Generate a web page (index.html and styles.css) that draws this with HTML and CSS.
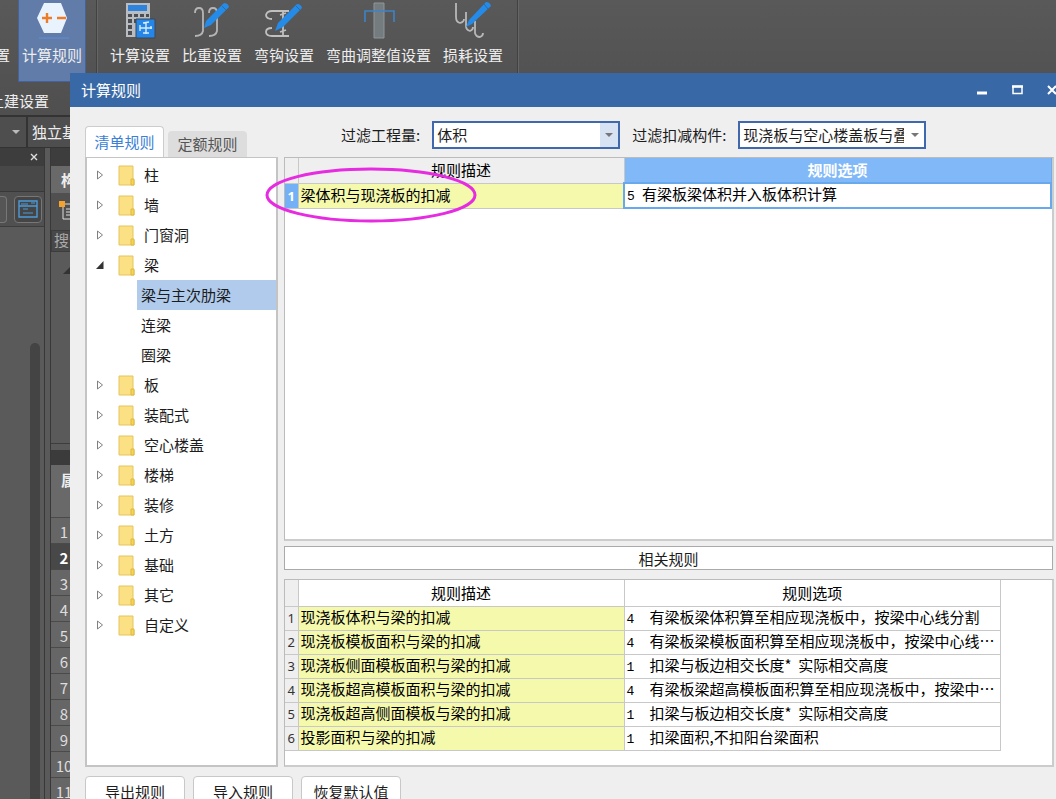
FILE: index.html
```html
<!DOCTYPE html>
<html lang="zh-CN">
<head>
<meta charset="utf-8">
<title>计算规则</title>
<link rel="stylesheet" href="styles.css">
</head>
<body>
<div class="app">
  <header class="ribbon">
    <div class="ribbon-row">
      <button class="tool tool-clipped">置</button>
      <button class="tool tool-active">
        <svg class="tool-icon" viewBox="0 0 40 40"><path d="M12 3h17l6 15-6 15H12L5 18z" fill="#e9f3fd"/><path d="M10 18h10M15 13v10M25 18h9" stroke="#ee7b28" stroke-width="2.4"/><path d="M7 38h30" stroke="#5e8fd8"/></svg>
        计算规则</button>
      <span class="divider"></span>
      <button class="tool">
        <svg class="tool-icon" viewBox="0 0 40 40"><path d="M6 3h24v34H6z" fill="#b9bcc0"/><path d="M8 5h19v6H8z" fill="#2e83dc"/><path d="M8 14h4v3H8zM14 14h4v3h-4zM20 14h4v3h-4zM26 14h3v3h-3zM8 19h4v4H8zM14 19h4v4h-4zM8 25h4v4H8zM8 31h4v4H8z" fill="#4b4e52"/><path d="M16 19h19v19H16z" fill="#2386e8" stroke="#3b4652"/><path d="M20 28h12M26 22v12M23 23l6-1M20 25v6M31 26v3M23 33h6" stroke="#d8eaff" stroke-width="1.4"/></svg>
        计算设置</button>
      <button class="tool">
        <svg class="tool-icon" viewBox="0 0 40 40"><g fill="none" stroke="#b5b5b5" stroke-width="1.8"><path d="M3 13Q3 8 7 8Q11 8 11 13V31Q10 36 3 36M17 13Q17 8 21 8Q25 8 25 13V31Q24 36 17 36"/></g><path d="M12 28l2-7L32 3q4 0 5 4L19 25z" fill="#258be8"/><path d="M30 6l4 4" stroke="#236dad"/></svg>
        比重设置</button>
      <button class="tool">
        <svg class="tool-icon" viewBox="0 0 40 40"><g fill="none" stroke="#c0c0c0" stroke-width="1.8"><path d="M8 19Q2 19 2 15Q3 11 8 11h17M25 36H8Q2 36 2 32Q2 28 8 28M19 11v25M16 15l6-2M16 32l6-2"/></g><path d="M11 31l3-8L33 4q4 0 5 4L19 27z" fill="#258be8"/><path d="M32 6l4 4" stroke="#236dad"/></svg>
        弯钩设置</button>
      <button class="tool">
        <svg class="tool-icon" viewBox="0 0 40 40"><path d="M15 3h10v35H15z" fill="#747c80" stroke="#8f969a"/><path d="M6 22V11h29v11" fill="none" stroke="#3e83c9" stroke-width="1.6"/></svg>
        弯曲调整值设置</button>
      <button class="tool">
        <svg class="tool-icon" viewBox="0 0 40 40"><g fill="none" stroke="#b8b8b8" stroke-width="1.8"><path d="M3 3v14q0 5 4 6q4-1 4-4M13 12v14q0 4 4 5q3-1 3-4M22 21v12q1 4 5 4q3-1 3-4"/></g><path d="M13 27l3-7L33 2q4 0 5 4L19 24z" fill="#258be8"/><path d="M31 4l4 5" stroke="#236dad"/></svg>
        损耗设置</button>
      <span class="divider divider-end"></span>
    </div>
    <div class="ribbon-group">土建设置</div>
  </header>
  <div class="context-bar">
    <span class="context-arrow"><i class="caret"></i></span>
    <span class="context-name">独立基础</span>
  </div>
  <div class="workspace">
    <aside class="nav-dock">
      <div class="dock-head"><button class="dock-close" aria-label="关闭"><svg viewBox="0 0 8 8" width="8" height="8"><path d="M1 1l6 6M7 1L1 7" stroke="#ddd" stroke-width="1.400"/></svg></button></div>
      <div class="dock-strip"></div>
      <div class="dock-tools">
        <span class="dock-btn dock-btn-cut"></span>
        <button class="dock-btn" aria-label="视图"><svg viewBox="0 0 20 18" width="20" height="18"><path d="M1 1h18v16H1zM1 6h18" fill="none" stroke="#4d9bd8" stroke-width="1.4"/><path d="M3 4h7M13 3h4M5 9h5M5 13h10" stroke="#4d9bd8"/></svg></button>
      </div>
      <div class="dock-body"><span class="scroll-thumb"></span></div>
    </aside>
    <aside class="part-dock">
      <div class="dock-head"></div>
      <div class="part-title">构件</div>
      <div class="part-tools"><svg viewBox="0 0 20 20" width="20" height="20"><path d="M5 4h14v15H5z" fill="none" stroke="#ddd"/><path d="M8 9h10M8 12h10M8 15h10" stroke="#ddd"/><path d="M1 1h6v6H1z" fill="#f5a32d"/></svg></div>
      <div class="part-search">搜索</div>
      <div class="part-body"><svg viewBox="0 0 8 8" width="8" height="8"><path d="M8 0v8H0z" fill="#333"/></svg></div>
      <div class="prop-head"></div>
      <div class="prop-title">属性</div>
      <ol class="prop-rows">
        <li>1</li><li class="current">2</li><li>3</li><li>4</li><li>5</li><li>6</li><li>7</li><li>8</li><li>9</li><li>10</li><li>11</li>
      </ol>
    </aside>
  </div>
</div>

<section class="dialog" role="dialog" aria-labelledby="dlg-title">
  <header class="titlebar">
    <h1 id="dlg-title">计算规则</h1>
    <button aria-label="最小化"><svg viewBox="0 0 12 12" width="12" height="12"><path d="M1 9h10" stroke="#fff" stroke-width="3"/></svg></button>
    <button aria-label="最大化"><svg viewBox="0 0 12 12" width="12" height="12"><path d="M2 2.500h9v7H2z" fill="none" stroke="#fff" stroke-width="1.500"/><path d="M1 2.500h11" stroke="#fff" stroke-width="2.500"/></svg></button>
    <button aria-label="关闭"><svg viewBox="0 0 12 12" width="12" height="12"><path d="M2 2l8 8M10 2l-8 8" stroke="#fff" stroke-width="2"/></svg></button>
  </header>
  <div class="content">
    <div class="side">
      <div class="tabs" role="tablist">
        <button class="tab tab-active" role="tab" aria-selected="true">清单规则</button>
        <button class="tab" role="tab" aria-selected="false">定额规则</button>
      </div>
      <svg class="symbols" width="0" height="0" aria-hidden="true">
        <symbol id="folder" viewBox="0 0 17 21"><path d="M1 1h14v13l1 1v5H1z" fill="#fbe184" stroke="#e5c55d"/><path d="M13 14h3v6h-3z" fill="#f8d455" stroke="#dcb944"/></symbol>
        <symbol id="shut" viewBox="0 0 8 10"><path d="M1.500 1v8L6.500 5z" fill="#fff" stroke="#808080"/></symbol>
        <symbol id="open" viewBox="0 0 8 10"><path d="M7.500 1v8H0z" fill="#333"/></symbol>
      </svg>
      <ul class="tree">
        <li><svg class="twist"><use href="#shut"/></svg><svg class="folder"><use href="#folder"/></svg>柱</li>
        <li><svg class="twist"><use href="#shut"/></svg><svg class="folder"><use href="#folder"/></svg>墙</li>
        <li><svg class="twist"><use href="#shut"/></svg><svg class="folder"><use href="#folder"/></svg>门窗洞</li>
        <li><svg class="twist"><use href="#open"/></svg><svg class="folder"><use href="#folder"/></svg>梁</li>
        <li class="leaf selected">梁与主次肋梁</li>
        <li class="leaf">连梁</li>
        <li class="leaf">圈梁</li>
        <li><svg class="twist"><use href="#shut"/></svg><svg class="folder"><use href="#folder"/></svg>板</li>
        <li><svg class="twist"><use href="#shut"/></svg><svg class="folder"><use href="#folder"/></svg>装配式</li>
        <li><svg class="twist"><use href="#shut"/></svg><svg class="folder"><use href="#folder"/></svg>空心楼盖</li>
        <li><svg class="twist"><use href="#shut"/></svg><svg class="folder"><use href="#folder"/></svg>楼梯</li>
        <li><svg class="twist"><use href="#shut"/></svg><svg class="folder"><use href="#folder"/></svg>装修</li>
        <li><svg class="twist"><use href="#shut"/></svg><svg class="folder"><use href="#folder"/></svg>土方</li>
        <li><svg class="twist"><use href="#shut"/></svg><svg class="folder"><use href="#folder"/></svg>基础</li>
        <li><svg class="twist"><use href="#shut"/></svg><svg class="folder"><use href="#folder"/></svg>其它</li>
        <li><svg class="twist"><use href="#shut"/></svg><svg class="folder"><use href="#folder"/></svg>自定义</li>
      </ul>
    </div>
    <div class="main">
      <div class="filters">
        <label for="qty">过滤工程量:</label>
        <span class="combo combo-shaded"><select id="qty"><option>体积</option></select><i class="caret"></i></span>
        <label for="part">过滤扣减构件:</label>
        <span class="combo"><select id="part"><option>现浇板与空心楼盖板与叠</option></select><i class="caret"></i></span>
      </div>
      <div class="panel rules">
        <table class="grid">
          <colgroup><col class="c-num"><col class="c-desc"><col></colgroup>
          <thead><tr><th></th><th>规则描述</th><th class="active-head">规则选项</th></tr></thead>
          <tbody><tr><th class="active-num">1</th><td class="desc">梁体积与现浇板的扣减</td><td class="editing"><span class="code">5</span>有梁板梁体积并入板体积计算</td></tr></tbody>
        </table>
        <svg class="mark" viewBox="0 0 212 58"><ellipse cx="106" cy="29" rx="104" ry="26" fill="none" stroke="#e62be0" stroke-width="3"/></svg>
      </div>
      <div class="lower">
        <h2 class="related-title">相关规则</h2>
        <div class="panel related">
          <table class="grid">
            <colgroup><col class="c-num"><col class="c-desc"><col></colgroup>
            <thead><tr><th></th><th>规则描述</th><th>规则选项</th></tr></thead>
            <tbody>
              <tr><th>1</th><td class="desc">现浇板体积与梁的扣减</td><td><span class="code">4</span>有梁板梁体积算至相应现浇板中，按梁中心线分割</td></tr>
              <tr><th>2</th><td class="desc">现浇板模板面积与梁的扣减</td><td><span class="code">4</span>有梁板梁模板面积算至相应现浇板中，按梁中心线⋯</td></tr>
              <tr><th>3</th><td class="desc">现浇板侧面模板面积与梁的扣减</td><td><span class="code">1</span>扣梁与板边相交长度*&nbsp; 实际相交高度</td></tr>
              <tr><th>4</th><td class="desc">现浇板超高模板面积与梁的扣减</td><td><span class="code">4</span>有梁板梁超高模板面积算至相应现浇板中，按梁中⋯</td></tr>
              <tr><th>5</th><td class="desc">现浇板超高侧面模板与梁的扣减</td><td><span class="code">1</span>扣梁与板边相交长度*&nbsp; 实际相交高度</td></tr>
              <tr><th>6</th><td class="desc">投影面积与梁的扣减</td><td><span class="code">1</span>扣梁面积,不扣阳台梁面积</td></tr>
            </tbody>
          </table>
        </div>
      </div>
    </div>
  </div>
  <footer class="actions">
    <button>导出规则</button>
    <button>导入规则</button>
    <button>恢复默认值</button>
  </footer>
</section>
</body>
</html>
```

FILE: styles.css
```css
* { box-sizing: border-box; }
body {
  margin: 0;
  height: 100vh;
  overflow: hidden;
  position: relative;
  font: 15px/20px "Noto Sans CJK SC", sans-serif;
  color: #1c1c1c;
}
button, select { font: inherit; color: inherit; }
button { border: 0; padding: 0; background: none; white-space: nowrap; }
ul, ol, h1, h2 { margin: 0; padding: 0; list-style: none; font-size: 15px; font-weight: 400; }
svg { display: block; flex: none; }
.caret {
  border: 4px solid transparent;
  border-top-color: #777;
  border-bottom: 0;
}

/* host application */
.app { height: 100%; display: flex; flex-direction: column; background: #5a5a5a; color: #eee; overflow: hidden; }
.ribbon { height: 117px; flex: none; background: linear-gradient(#595959, #4f4f4f); border-bottom: 2px solid #333; }
.ribbon-row { display: flex; height: 82px; }
.tool { display: flex; flex-direction: column; align-items: center; gap: 5px; margin: 0 0 0 12px; height: 82px; flex: none; }
.tool-icon { width: 40px; height: 40px; }
.tool-clipped { margin-left: -5px; padding-top: 45px; }
.tool-active { margin-left: 8px; padding: 0 3px; background: #617ca8; border: 1px solid #44639a; border-top: 0; }
.divider { width: 2px; margin-left: 10px; background: #424242; border-right: 1px solid #666; }
.divider-end { margin-left: 14px; }
.ribbon-group { padding: 9px 0 0; margin-left: -11px; }
.context-bar { display: flex; height: 31px; flex: none; background: #4e4e4e; border-bottom: 1px solid #333; }
.context-arrow { width: 28px; display: flex; align-items: center; justify-content: center; padding-left: 6px; border-right: 2px solid #333; }
.context-arrow .caret { border-top-color: #bbb; }
.context-name { padding: 5px 4px; }
.workspace { flex: 1; display: flex; gap: 5px; min-height: 0; }
.nav-dock { width: 45px; display: flex; flex-direction: column; border-right: 1px solid #383838; }
.part-dock { flex: 1; border-left: 1px solid #383838; }
.dock-head { display: flex; align-items: center; justify-content: flex-end; height: 18px; padding-right: 6px; background: #3d3d3d; flex: none; }
.dock-strip { height: 26px; background: #484848; border-bottom: 1px solid #383838; }
.dock-tools { display: flex; align-items: center; gap: 7px; height: 35px; border-bottom: 1px solid #3d3d3d; background: #505050; }
.dock-btn { width: 28px; height: 27px; border: 1px solid #777; border-radius: 4px; background: #454545; display: flex; align-items: center; justify-content: center; }
.dock-btn-cut { width: 7px; border-left: 0; border-radius: 0 4px 4px 0; background: #555; }
.dock-body { flex: 1; display: flex; justify-content: flex-end; padding: 116px 4px 0 0; }
.scroll-thumb { width: 10px; border-radius: 5px 5px 0 0; background: #444; }
.part-title { height: 27px; padding: 4px 10px; background: #696969; font-weight: 700; }
.part-tools { height: 37px; padding: 7px; background: #505050; }
.part-search { height: 22px; padding-left: 2px; line-height: 18px; color: #aaa; background: #484848; border: 1px solid #3d3d3d; }
.part-body { height: 192px; padding: 14px 12px; border-bottom: 1px solid #3d3d3d; }
.prop-head { height: 15px; margin-top: 6px; background: #3b3b3b; }
.prop-title { height: 53px; padding: 5px 10px; background: #696969; border-bottom: 1px solid #4a4a4a; font-weight: 700; }
.prop-rows li { height: 26px; width: 26px; line-height: 28px; text-align: center; background: #666; border-bottom: 1px solid #4a4a4a; color: #ddd; }
.prop-rows .current { background: #484848; color: #fff; font-weight: 700; }

/* rule window */
.dialog { position: absolute; top: 73px; left: 70px; right: 0; bottom: 0; display: flex; flex-direction: column; background: #efefef; overflow: hidden; }
.titlebar { height: 34px; flex: none; display: flex; align-items: center; gap: 23px; padding: 0 0 1px 11px; margin-right: -2px; background: #3869a6; color: #fff; }
.titlebar h1 { flex: 1; }
.content { flex: 1; min-height: 0; display: flex; gap: 6px; padding: 0 2px 0 15px; }
.side { width: 193px; flex: none; display: flex; flex-direction: column; padding-top: 19px; }
.symbols { position: absolute; }
.tabs { display: flex; gap: 4px; align-items: flex-end; height: 31px; flex: none; }
.tab { height: 26px; width: 79px; background: #ddd; border-radius: 4px 4px 0 0; color: #555; }
.tab-active { height: 31px; background: #fff; border: 1px solid #ccc; border-bottom: 0; color: #3c7fd6; }
.tree { flex: 1; background: #fff; border: 2px solid #c4c4c4; border-width: 1px 2px 2px; padding-top: 2px; }
.tree li { height: 30px; display: flex; align-items: center; padding-left: 9px; }
.tree .leaf { margin-left: 50px; padding-left: 4px; }
.tree .selected { background: #b0cbec; }
.twist { width: 8px; height: 10px; margin-right: 14px; }
.folder { width: 17px; height: 21px; margin-right: 9px; }
.main { flex: 1; min-width: 0; display: flex; flex-direction: column; }
.filters { height: 50px; flex: none; display: flex; align-items: center; gap: 12px; padding: 6px 0 0 57px; }
.filters label { flex: none; }
.combo { position: relative; width: 188px; height: 28px; flex: none; }
.combo select { appearance: none; width: 100%; height: 28px; border: 2px solid #4068ac; border-radius: 0; background: #fff; padding: 0 20px 0 3px; line-height: 22px; }
.combo-shaded select { background: linear-gradient(#d7e2f2, #d7e2f2) right / 18px 100% no-repeat #fff; }
.combo .caret { position: absolute; right: 7px; top: 12px; }
.panel { background: #fff; border: 1px solid #bbb; border-right: 2px solid #ccc; border-bottom: 2px solid #ccc; }
.rules { flex: 1; position: relative; min-height: 0; }
.mark { position: absolute; left: -20px; top: 8px; width: 212px; height: 58px; }
.grid { border-collapse: collapse; table-layout: fixed; width: 100%; color: #000; }
.c-num { width: 13px; }
.c-desc { width: 326px; }
.grid th, .grid td { height: 24px; padding: 0; border: 1px solid #c8c8c8; font-weight: 400; line-height: 20px; white-space: nowrap; overflow: hidden; }
.grid thead th { height: 26px; }
.grid tr > :first-child { border-left: 0; background: #efefef; }
.grid thead tr > * { border-top: 0; }
.grid tbody th { font-family: "Noto Sans", sans-serif; font-size: 13px; color: #333; }
.grid td { padding: 0 2px 2px; }
.grid .desc { background: #f5f9ac; }
.rules thead th { height: 25px; background: #efefef; }
.rules thead .active-head { background: #80b8f8; border-color: #73abe9; color: #fff; font-weight: 700; }
.rules tbody tr .active-num { background: #73b0f5; color: #fff; font-weight: 700; }
.rules td { line-height: 19px; }
.rules .editing { border: 2px solid #68a8ec; }
.code { display: inline-block; width: 23px; font-family: "Liberation Mono", monospace; font-size: 13px; line-height: 16px; }
.rules .code { width: 15px; }
.lower { height: 221px; margin-top: 5px; flex: none; display: flex; flex-direction: column; gap: 9px; }
.related-title { height: 24px; line-height: 23px; margin-right: 1px; text-align: center; border: 1px solid #aaa; background: #fff; }
.related { flex: 1; padding-right: 51px; }
.actions { height: 32px; flex: none; display: flex; gap: 8px; padding: 9px 0 0 15px; }
.actions button { width: 100px; height: 32px; flex: none; background: #fff; border: 1px solid #c8c8c8; border-radius: 4px; }
```
